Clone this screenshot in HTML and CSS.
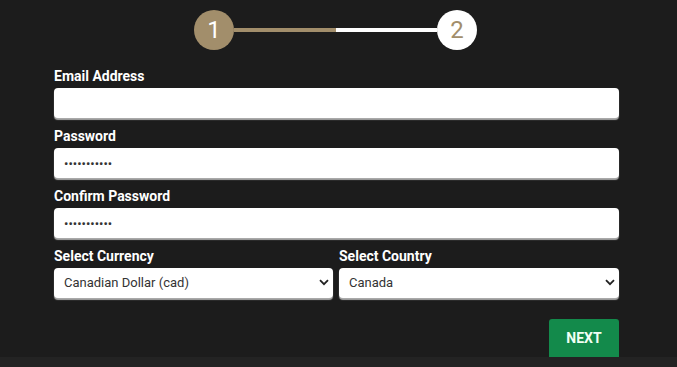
FILE: index.html
```html
<!DOCTYPE html>
<html>
<head>
<meta charset="utf-8">
<link rel="stylesheet" href="styles.css">
</head>
<body>
<div class="page">
  <div class="wrap">
    <div class="stepper">
      <div class="step step-active">1</div>
      <div class="track"><div class="track-fill"></div></div>
      <div class="step step-next">2</div>
    </div>
    <form class="form">
      <label class="field">
        <span class="label">Email Address</span>
        <input class="control" type="text" value="">
      </label>
      <label class="field">
        <span class="label">Password</span>
        <input class="control" type="password" value="password123">
      </label>
      <label class="field">
        <span class="label">Confirm Password</span>
        <input class="control" type="password" value="password123">
      </label>
      <div class="row">
        <label class="field field-half">
          <span class="label">Select Currency</span>
          <span class="select-box">
            <select class="control select"><option>Canadian Dollar (cad)</option></select>
            <svg class="chev" width="10" height="7" viewBox="0 0 10 7"><path d="M1 1.2 L5 5.2 L9 1.2" fill="none" stroke="#222" stroke-width="1.8"/></svg>
          </span>
        </label>
        <label class="field field-half">
          <span class="label">Select Country</span>
          <span class="select-box">
            <select class="control select"><option>Canada</option></select>
            <svg class="chev" width="10" height="7" viewBox="0 0 10 7"><path d="M1 1.2 L5 5.2 L9 1.2" fill="none" stroke="#222" stroke-width="1.8"/></svg>
          </span>
        </label>
      </div>
      <div class="actions">
        <button type="button" class="btn-next">NEXT</button>
      </div>
    </form>
  </div>
</div>
</body>
</html>
```
FILE: styles.css
```css
html, body {
  margin: 0;
  padding: 0;
}
body {
  background: #232323;
  font-family: Roboto, "Liberation Sans", Arial, sans-serif;
  width: 677px;
  height: 367px;
  overflow: hidden;
}
.page {
  background: #1c1c1c;
  height: 357px;
  overflow: hidden;
}
.wrap {
  width: 565px;
  margin-left: 54px;
  padding-top: 10px;
}
.stepper {
  display: flex;
  align-items: center;
  justify-content: center;
  width: 283px;
  margin: 0 auto 0 140px;
  height: 40px;
}
.step {
  width: 40px;
  height: 40px;
  border-radius: 50%;
  display: flex;
  align-items: center;
  justify-content: center;
  font-size: 24px;
  flex: none;
}
.step-active {
  background: #a28e6b;
  color: #ffffff;
}
.step-next {
  background: #ffffff;
  color: #a28e6b;
}
.track {
  width: 203px;
  height: 4px;
  background: #ffffff;
  flex: none;
}
.track-fill {
  width: 102px;
  height: 4px;
  background: #a28e6b;
}
.form {
  margin-top: 17px;
  display: flex;
  flex-direction: column;
  gap: 9px;
}
.field {
  display: flex;
  flex-direction: column;
  gap: 3px;
}
.label {
  color: #ffffff;
  font-weight: bold;
  font-size: 14px;
  line-height: 18px;
}
.control {
  box-sizing: border-box;
  width: 565px;
  height: 30px;
  border: none;
  border-radius: 4px;
  background: #ffffff;
  box-shadow: 0 2px 1px #a9a9a9;
  padding: 0 10px;
  font-family: Roboto, "Liberation Sans", Arial, sans-serif;
  font-size: 13px;
  color: #333;
  outline: none;
  margin: 0;
}
.row {
  display: flex;
  gap: 6px;
}
.field-half {
  flex: 0 0 auto;
}
.field-half:first-child .control {
  width: 279px;
}
.field-half:last-child .control {
  width: 280px;
}
.select-box {
  position: relative;
  display: block;
}
.select {
  appearance: none;
  -webkit-appearance: none;
  padding-bottom: 2px;
}
.chev {
  position: absolute;
  right: 4px;
  top: 11px;
  pointer-events: none;
}
.actions {
  display: flex;
  justify-content: flex-end;
  margin-top: 12px;
}
.btn-next {
  width: 70px;
  height: 42px;
  border: none;
  border-radius: 3px;
  background: #138a4b;
  color: #f1fff4;
  font-family: Roboto, "Liberation Sans", Arial, sans-serif;
  font-weight: bold;
  font-size: 14px;
  padding: 0 0 4px 0;
}
```
